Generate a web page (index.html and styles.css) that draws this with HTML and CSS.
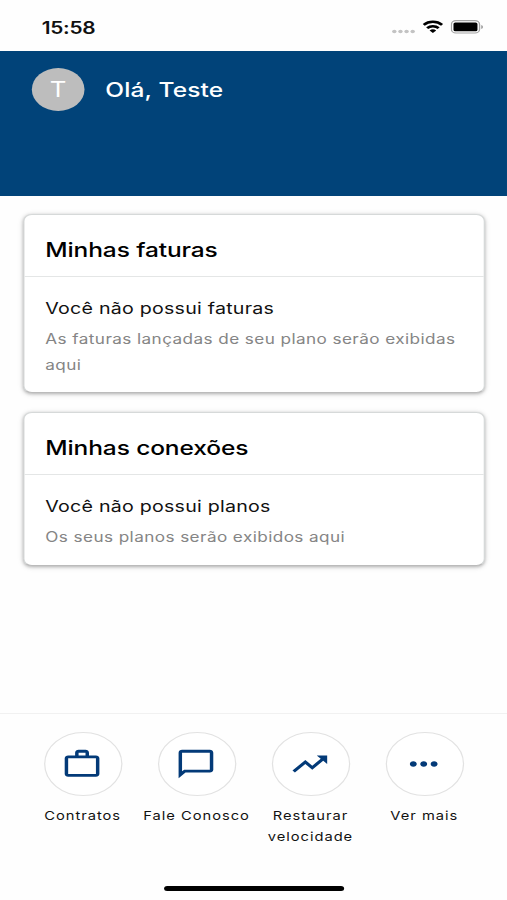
FILE: index.html
```html
<!DOCTYPE html>
<html lang="pt-BR">
<head>
<meta charset="utf-8">
<title>Início</title>
<link rel="stylesheet" href="styles.css">
</head>
<body>
<div class="screen">
  <div class="status">
    <span class="time">15:58</span>
    <div class="indicators">
      <svg class="signal" width="20" height="5" viewBox="0 0 20 5"><g fill="#c3c3c3"><circle cx="2" cy="2.5" r="1.8"/><circle cx="7" cy="2.5" r="1.8"/><circle cx="12" cy="2.5" r="1.8"/><circle cx="17" cy="2.5" r="1.8"/></g></svg>
      <svg class="wifi" width="17" height="13" viewBox="0 0 17 13"><g fill="none" stroke="#000" stroke-width="2.4"><path d="M1 4.800a10.800 10.800 0 0 1 15 0"/><path d="M3.800 8.100a6.800 6.800 0 0 1 9.400 0"/></g><path d="M8.500 13 5.800 10.600a3.800 3.800 0 0 1 5.400 0z"/></svg>
      <svg class="battery" width="27" height="14" viewBox="0 0 27 14"><rect x=".6" y=".6" width="23" height="12.4" rx="3.800" fill="#fff" stroke="#a3a3a3" stroke-width="1.1"/><rect x="2.3" y="2.4" width="19.6" height="8.800" rx="1.500" /><path d="M25 5v4q1.4-.6 1.4-2T25 5z" fill="#999"/></svg>
    </div>
  </div>
  <header class="header">
    <div class="avatar">T</div>
    <div class="hello">Olá, Teste</div>
  </header>
  <main class="content">
    <section class="card">
      <h2 class="card-title">Minhas faturas</h2>
      <div class="card-body">
        <p class="lead">Você não possui faturas</p>
        <p class="note">As faturas lançadas de seu plano serão exibidas aqui</p>
      </div>
    </section>
    <section class="card">
      <h2 class="card-title">Minhas conexões</h2>
      <div class="card-body">
        <p class="lead">Você não possui planos</p>
        <p class="note">Os seus planos serão exibidos aqui</p>
      </div>
    </section>
  </main>
  <nav class="nav">
    <a class="item"><span class="circle"><svg class="icon" viewBox="0 0 24 24"><path fill-rule="evenodd" d="M14 6V4h-4v2h4zM4 8v11h16V8H4zm16-2c1.11 0 2 .89 2 2v11c0 1.11-.89 2-2 2H4c-1.11 0-2-.89-2-2V8c0-1.11.89-2 2-2h4V4c0-1.11.89-2 2-2h4c1.11 0 2 .89 2 2v2h4z"/></svg></span><span class="label">Contratos</span></a>
    <a class="item"><span class="circle"><svg class="icon" viewBox="0 0 24 24"><path d="M20 2H4c-1.1 0-2 .9-2 2v18l4-4h14c1.1 0 2-.9 2-2V4c0-1.1-.9-2-2-2zm0 14H5.200L4 17.200V4h16v12z"/></svg></span><span class="label">Fale Conosco</span></a>
    <a class="item"><span class="circle"><svg class="icon" viewBox="0 0 24 24"><path d="m16 6 2.290 2.290-4.880 4.880-4-4L2 16.590 3.410 18l6-6 4 4 6.300-6.290L22 12V6z"/></svg></span><span class="label">Restaurar velocidade</span></a>
    <a class="item"><span class="circle"><svg class="icon" viewBox="0 0 24 24"><path d="M6 10c-1.100 0-2 .9-2 2s.9 2 2 2 2-.9 2-2-.9-2-2-2zm12 0c-1.100 0-2 .9-2 2s.9 2 2 2 2-.9 2-2-.9-2-2-2zm-6 0c-1.100 0-2 .9-2 2s.9 2 2 2 2-.9 2-2-.9-2-2-2z"/></svg></span><span class="label">Ver mais</span></a>
  </nav>
  <div class="home"></div>
</div>
</body>
</html>
```
FILE: styles.css
```css
* { box-sizing: border-box; }
body { margin: 0; background: #fefefe; overflow: hidden; }

.screen {
  display: flex;
  flex-direction: column;
  width: 414px;
  height: 900px;
  transform: scaleX(1.2246);
  transform-origin: 0 0;
  font-family: Inter, "Liberation Sans", sans-serif;
  color: #111;
}

.status {
  display: flex;
  justify-content: space-between;
  height: 51px;
  padding: 17px 19px 0 34px;
}
.time { padding-top: 1px; font-size: 17px; line-height: 21px; font-weight: 600; letter-spacing: -.2px; }
.indicators { display: flex; align-items: flex-start; }
.signal { margin-top: 12px; }
.wifi { margin: 3px 6px 0 5px; }
.battery { margin-top: 3px; }

.header {
  display: flex;
  align-items: flex-start;
  height: 145px;
  padding: 17px 26px;
  background: #014379;
  color: #fff;
}
.avatar {
  width: 43px;
  height: 43px;
  border-radius: 50%;
  background: #bdbdbd;
  font-size: 21px;
  font-weight: 400;
  line-height: 43px;
  text-align: center;
}
.hello { margin-left: 17px; padding-top: 1px; font-size: 20px; line-height: 43px; font-weight: 500; letter-spacing: .1px; }

.content { flex: 1; padding: 18px 18px 0 19px; }
.card {
  height: 179px;
  margin-bottom: 19px;
  border: 1px solid #d6d9d9;
  border-bottom-color: #bbb;
  border-radius: 7px;
  background: #fff;
  box-shadow: 0 1px 3px rgba(0, 0, 0, .25), 0 1px 6px rgba(0, 0, 0, .1);
}
.card + .card { height: 154px; }
.card-title {
  margin: 0;
  height: 62px;
  padding: 5px 17px 0;
  border-bottom: 1px solid #e4e6e6;
  font-size: 20px;
  line-height: 61px;
  font-weight: 500;
  letter-spacing: -.09px;
  color: #000;
}
.card-body { padding: 17px 17px 0; }
.lead { margin: 0; font-size: 16px; line-height: 28px; letter-spacing: .2px; }
.note { margin: 4px 0 0; font-size: 14px; line-height: 25.500px; color: #858585; letter-spacing: .34px; }

.nav {
  display: grid;
  grid-template-columns: repeat(4, 93px);
  height: 173px;
  padding: 18px 0 0 21px;
  border-top: 1px solid #f1f1f1;
}
.item { display: flex; flex-direction: column; align-items: center; }
.circle {
  display: flex;
  align-items: center;
  justify-content: center;
  width: 64px;
  height: 64px;
  border: 1px solid #e2e2e2;
  border-radius: 50%;
  background: #fff;
}
.icon { width: 34px; height: 34px; margin: -1px 0 0 -1px; fill: #033a78; }
.label { margin-top: 9px; font-size: 12px; line-height: 21px; letter-spacing: .8px; text-align: center; }

.home { width: 147px; height: 5px; margin-left: 134px; border-radius: 3px; background: #000; margin-bottom: 9px; flex-shrink: 0; }
```
